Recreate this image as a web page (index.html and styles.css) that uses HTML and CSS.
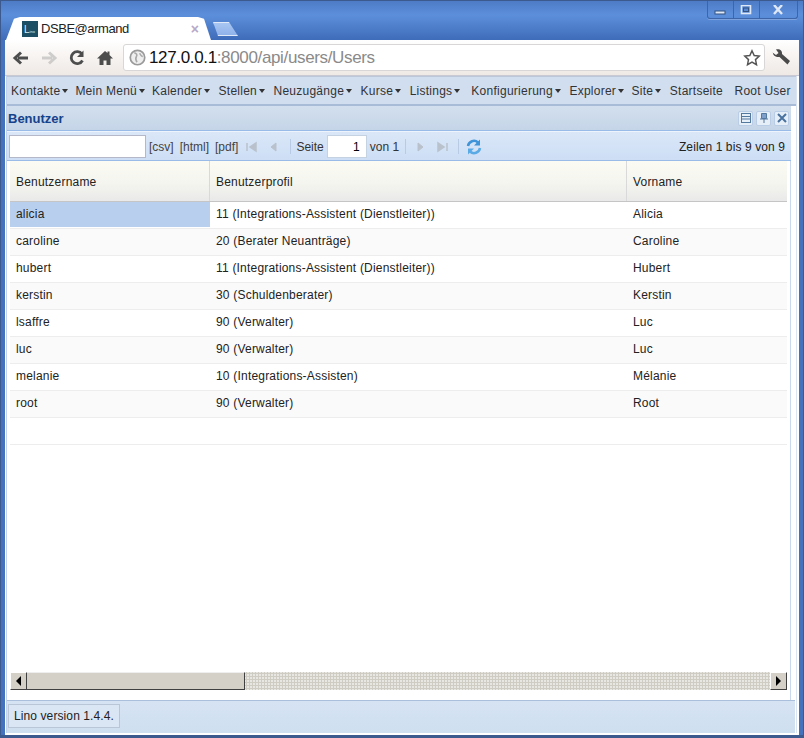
FILE: index.html
```html
<!DOCTYPE html>
<html lang="en">
<head>
    <meta charset="UTF-8">
    <title>DSBE@armand</title>
    <link rel="stylesheet" href="styles.css">
</head>
<body>
<div class="window">
    <div class="tabstrip">
        <div class="tab">
            <span class="favicon">L<i>ino</i></span>
            <span class="tab-title">DSBE@armand</span>
            <span class="tab-close">×</span>
        </div>
        <div class="newtab"></div>
        <div class="win-buttons">
            <span class="win-btn min"><svg width="12" height="10" viewBox="0 0 12 10"><rect x="1" y="6" width="10" height="3" fill="#dfe8f6" stroke="#33527f" stroke-width="1"/></svg></span>
            <span class="win-btn max"><svg width="12" height="10" viewBox="0 0 12 10"><rect x="1.5" y="0.5" width="9" height="8" fill="none" stroke="#dfe8f6" stroke-width="1.6"/><rect x="3.5" y="3" width="5" height="3.5" fill="none" stroke="#33527f"/></svg></span>
            <span class="win-btn close"><svg width="12" height="10" viewBox="0 0 12 10"><path d="M2 0l8 9M10 0L2 9" stroke="#dfe8f6" stroke-width="2.4"/></svg></span>
        </div>
    </div>

    <div class="client">
        <div class="navbar">
            <svg class="nav-icon" width="18" height="18" viewBox="0 0 18 18"><path d="M16 9H6M9 3.500L3 9l6 5.500" fill="none" stroke="#4d4d4d" stroke-width="3"/></svg>
            <svg class="nav-icon" width="18" height="18" viewBox="0 0 18 18"><path d="M2 9h10M9 3.500L15 9l-6 5.500" fill="none" stroke="#cfcdcb" stroke-width="3"/></svg>
            <svg class="nav-icon" width="18" height="18" viewBox="0 0 18 18"><path d="M14.500 11.500A6 6 0 1 1 14 5" fill="none" stroke="#4d4d4d" stroke-width="2.800"/><path d="M15.500 1.500v6.500h-6.500z" fill="#4d4d4d"/></svg>
            <svg class="nav-icon" width="18" height="18" viewBox="0 0 18 18"><path d="M9 2L1 9.500h2.500V16h4v-4.500h3V16h4V9.500H17L13.500 6V2.500h-2V4z" fill="#4d4d4d"/></svg>
            <div class="address">
                <svg width="17" height="17" viewBox="0 0 16 16"><circle cx="8" cy="8" r="6.800" fill="#eeeeee" stroke="#9a9a9a" stroke-width="1.600"/><path d="M5 3.500c2 .5 3 2 2 3.500s-1 3 .5 5.500M10 4c1 2 2 3 3 3" fill="none" stroke="#a8a8a8" stroke-width="1.500"/></svg>
                <span class="url"><b>127.0.0.1</b>:8000/api/users/Users</span>
                <svg class="star" width="18" height="18" viewBox="0 0 18 18"><path d="M9 1.800l2.200 4.700 5 .6-3.700 3.500 1 5.100L9 13.200l-4.500 2.500 1-5.100L1.800 7.100l5-.6z" fill="#fff" stroke="#555" stroke-width="1.500"/></svg>
            </div>
            <svg class="wrench" width="20" height="20" viewBox="0 0 20 20"><path d="M1.500 4.500l3.500 2.500 2.500-2-2.500-3.500c3.500-1 6.500 1 6 4.500l8 7-2.500 3.500-8-7.500c-3.500 .5-7-2-6.500-4.500z" fill="#4a4a4a"/></svg>
        </div>

        <div class="app">
            <div class="menubar">
                <span class="menu has-sub">Kontakte</span>
                <span class="menu has-sub">Mein Menü</span>
                <span class="menu has-sub">Kalender</span>
                <span class="menu has-sub">Stellen</span>
                <span class="menu has-sub">Neuzugänge</span>
                <span class="menu has-sub">Kurse</span>
                <span class="menu has-sub">Listings</span>
                <span class="menu has-sub">Konfigurierung</span>
                <span class="menu has-sub">Explorer</span>
                <span class="menu has-sub">Site</span>
                <span class="menu">Startseite</span>
                <span class="menu root">Root User</span>
            </div>

            <div class="panel-head">
                <span class="panel-title">Benutzer</span>
                <div class="tools">
                    <span class="tool"><svg width="12" height="12" viewBox="0 0 12 12"><rect x="1.500" y="1.500" width="9" height="9" fill="none" stroke="#54799f"/><path d="M2 4.500h8M2 7h8" stroke="#54799f"/></svg></span>
                    <span class="tool"><svg width="12" height="12" viewBox="0 0 12 12"><path d="M3.500 1.500h5v5h-5zM2 7h8M6 7v4" fill="#7e9fca" stroke="#54799f"/></svg></span>
                    <span class="tool"><svg width="12" height="12" viewBox="0 0 12 12"><path d="M2 2l8 8M10 2l-8 8" stroke="#4a72a0" stroke-width="2"/></svg></span>
                </div>
            </div>

            <div class="pager">
                <input class="search" type="text">
                <a class="export">[csv]</a>
                <a class="export">[html]</a>
                <a class="export">[pdf]</a>
                <svg class="pg-first" width="14" height="12" viewBox="0 0 14 12"><path d="M2 2v8M11 2v8L5 6z" fill="#b9c2cc" stroke="#b9c2cc" stroke-width="1.500"/></svg>
                <svg class="pg-prev" width="10" height="12" viewBox="0 0 10 12"><path d="M7 2v8L2 6z" fill="#b9c2cc" stroke="#b9c2cc"/></svg>
                <span class="sep"></span>
                <span class="pg-label">Seite</span>
                <input class="page-no" type="text" value="1">
                <span class="pg-of">von 1</span>
                <span class="sep"></span>
                <svg class="pg-next" width="10" height="12" viewBox="0 0 10 12"><path d="M3 2v8l5-4z" fill="#b9c2cc" stroke="#b9c2cc"/></svg>
                <svg class="pg-last" width="14" height="12" viewBox="0 0 14 12"><path d="M12 2v8M3 2v8l6-4z" fill="#b9c2cc" stroke="#b9c2cc" stroke-width="1.500"/></svg>
                <span class="sep"></span>
                <svg class="pg-refresh" width="18" height="18" viewBox="0 0 18 18"><path d="M3 8a6 6 0 0 1 10-3.500" fill="none" stroke="#3f93d8" stroke-width="2.500"/><path d="M15 1.500v6h-6z" fill="#3f93d8"/><path d="M15 10a6 6 0 0 1-10 3.500" fill="none" stroke="#5aaae6" stroke-width="2.500"/><path d="M3 16.500v-6h6z" fill="#5aaae6"/></svg>
                <span class="pg-info">Zeilen 1 bis 9 von 9</span>
            </div>

            <div class="grid">
                <div class="row head">
                    <div class="cell c1">Benutzername</div>
                    <div class="cell c2">Benutzerprofil</div>
                    <div class="cell c3">Vorname</div>
                </div>
                <div class="row"><div class="cell c1 selected">alicia</div><div class="cell c2">11 (Integrations-Assistent (Dienstleiter))</div><div class="cell c3">Alicia</div></div>
                <div class="row alt"><div class="cell c1">caroline</div><div class="cell c2">20 (Berater Neuanträge)</div><div class="cell c3">Caroline</div></div>
                <div class="row"><div class="cell c1">hubert</div><div class="cell c2">11 (Integrations-Assistent (Dienstleiter))</div><div class="cell c3">Hubert</div></div>
                <div class="row alt"><div class="cell c1">kerstin</div><div class="cell c2">30 (Schuldenberater)</div><div class="cell c3">Kerstin</div></div>
                <div class="row"><div class="cell c1">lsaffre</div><div class="cell c2">90 (Verwalter)</div><div class="cell c3">Luc</div></div>
                <div class="row alt"><div class="cell c1">luc</div><div class="cell c2">90 (Verwalter)</div><div class="cell c3">Luc</div></div>
                <div class="row"><div class="cell c1">melanie</div><div class="cell c2">10 (Integrations-Assisten)</div><div class="cell c3">Mélanie</div></div>
                <div class="row alt"><div class="cell c1">root</div><div class="cell c2">90 (Verwalter)</div><div class="cell c3">Root</div></div>
                <div class="row"><div class="cell c1"></div><div class="cell c2"></div><div class="cell c3"></div></div>

                <div class="hscroll">
                    <span class="sb-btn"><i class="arrow-left"></i></span>
                    <span class="sb-thumb"></span>
                    <span class="sb-track"></span>
                    <span class="sb-btn"><i class="arrow-right"></i></span>
                </div>
            </div>

            <div class="footer">
                <span class="version">Lino version 1.4.4.</span>
            </div>
        </div>
    </div>
</div>
</body>
</html>
```

FILE: styles.css
```css
* {
    box-sizing: border-box;
}

html, body {
    margin: 0;
    padding: 0;
    width: 804px;
    height: 738px;
    overflow: hidden;
}

body {
    font-family: "Liberation Sans", Arial, sans-serif;
    font-size: 12px;
    color: #1a1a1a;
}

.window {
    width: 804px;
    height: 738px;
    display: flex;
    flex-direction: column;
    background: #4572bd;
    border: 1px solid #3d5a8f;
    border-bottom: 3px solid #3d5a8f;
    padding: 0 4px;
}

/* tab strip */
.tabstrip {
    height: 39px;
    flex: none;
    display: flex;
    align-items: flex-end;
    margin: 0 -4px;
    padding-left: 5px;
    background: linear-gradient(#4e7bc6 0, #5c8fdb 14px, #3f6cb8 39px);
}

.tab {
    width: 205px;
    height: 23px;
    display: flex;
    align-items: center;
    padding: 0 12px 0 16px;
    background: #fff;
    border-radius: 7px 7px 0 0;
    clip-path: polygon(0 100%, 8px 8%, 14px 0, 192px 0, 198px 8%, 205px 100%);
}

.favicon {
    width: 16px;
    height: 16px;
    background: #1c4f63;
    color: #d6eef2;
    font-size: 10px;
    line-height: 17px;
    padding-left: 2px;
    margin-right: 3px;
    overflow: hidden;
    white-space: nowrap;
}

.favicon i {
    font-style: normal;
    font-size: 4px;
}

.tab-title {
    flex: 1;
    font-size: 13px;
    letter-spacing: -0.45px;
    color: #222;
}

.tab-close {
    color: #b7a9c9;
    font-size: 14px;
    font-weight: bold;
}

.newtab {
    width: 25px;
    height: 14px;
    margin: 0 0 4px 2px;
    background: linear-gradient(#a9c6f2, #8fb2ea);
    border: 1px solid #e0e9f7;
    clip-path: polygon(0 0, 16px 0, 25px 100%, 5px 100%);
}

.win-buttons {
    margin-left: auto;
    margin-right: 5px;
    align-self: flex-start;
    width: 91px;
    height: 18px;
    display: flex;
    border: 1px solid #3d65a8;
    border-top: none;
    border-radius: 0 0 3px 3px;
    box-shadow: 0 1px 0 #7ea3dc;
}

.win-btn {
    flex: 1;
    display: flex;
    align-items: center;
    justify-content: center;
    border-left: 1px solid #3d65a8;
}

.win-btn.min {
    border-left: none;
}

.win-btn.close {
    flex: 1.500;
}

/* chrome toolbar */
.client {
    flex: 1;
    display: flex;
    flex-direction: column;
    background: #fff;
    min-height: 0;
}

.navbar {
    height: 36px;
    flex: none;
    display: flex;
    align-items: center;
    padding: 0 2px 0 7px;
    gap: 10px;
    background: linear-gradient(#ffffff 0, #f5f1ee 60%, #efe9e6 100%);
    border-bottom: 1px solid #c9c9d3;
}

.nav-icon {
    flex: none;
}

.address {
    width: 642px;
    height: 27px;
    margin-left: -1px;
    display: flex;
    align-items: center;
    gap: 3px;
    padding: 0 3px 0 5px;
    background: #fff;
    border: 1px solid #d8d6d6;
    border-radius: 3px;
}

.url {
    flex: 1;
    padding-top: 1px;
    font-size: 17px;
    color: #8a8a8a;
    letter-spacing: -0.35px;
}

.url b {
    font-weight: normal;
    color: #111;
}

.wrench {
    margin-left: -4px;
}

/* app */
.app {
    flex: 1;
    display: flex;
    flex-direction: column;
    min-height: 0;
    margin: 0 2px 2px 1px;
    background: #fff;
    border-left: 1px solid #c3d2e6;
    border-right: 1px solid #dbe5f2;
}

.menubar {
    height: 30px;
    flex: none;
    display: flex;
    align-items: center;
    padding: 1px 0 0 4px;
    background: #d0def0;
    border-top: 1px solid #bcc8da;
    border-bottom: 2px solid #a8bcd8;
    white-space: nowrap;
}

.menu {
    margin-right: 8.5px;
    letter-spacing: 0.25px;
    color: #333;
}

/* the first two and Listings don't sit on the regular spacing */
.menu:nth-child(-n+2) {
    margin-right: 7px;
}

.menu:nth-child(7) {
    margin-right: 11px;
}

.menu:nth-child(9) {
    margin-right: 7.5px;
}

.has-sub::after {
    content: "";
    display: inline-block;
    margin-left: 2px;
    vertical-align: 2px;
    border-top: 4px solid #333;
    border-left: 3.500px solid transparent;
    border-right: 3.500px solid transparent;
}

.menu.root {
    margin-left: 3px;
    margin-right: 0;
}

.panel-head {
    height: 25px;
    flex: none;
    display: flex;
    align-items: center;
    justify-content: space-between;
    padding: 0 2px 0 1px;
    margin-right: 5px;
    background: linear-gradient(#d3dfed, #c5d5e8);
    border-bottom: 1px solid #99bbe8;
}

.panel-title {
    font-size: 13px;
    font-weight: bold;
    color: #15428b;
}

.tools {
    display: flex;
    gap: 3px;
}

.tool {
    width: 15px;
    height: 15px;
    display: flex;
    align-items: center;
    justify-content: center;
    background: #e6eef8;
    border: 1px solid #b9cde6;
    border-radius: 2px;
}

.pager {
    height: 30px;
    flex: none;
    display: flex;
    align-items: center;
    padding: 1px 6px 0 2px;
    margin-right: 5px;
    background: linear-gradient(#dbe7f8, #cddef5);
    border-bottom: 1px solid #99bbe8;
    border-top: 1px solid #eef4fc;
    color: #333;
}

.search {
    width: 137px;
    height: 23px;
    border: 1px solid #b5b8c8;
    background: #fff;
    margin-right: 3px;
}

.export {
    margin-right: 6px;
    color: #444;
}

.pg-first {
    margin: 0 10px 0 1px;
}

.pg-prev {
    margin-right: 5px;
}

.sep {
    width: 1px;
    height: 15px;
    background: #b8cbe4;
    margin: 0 6px;
}

.pg-label {
    margin-left: -1px;
}

.page-no {
    width: 40px;
    height: 23px;
    margin: 0 3px 0 3px;
    padding: 0 6px 0 0;
    border: 1px solid #c5d2e2;
    background: #fff;
    font: 12px "Liberation Sans", sans-serif;
    text-align: right;
}

.pg-next {
    margin: 0 10px 0 3px;
}

.pg-last {
    margin-right: 3px;
}

.pg-info {
    margin-left: auto;
    letter-spacing: 0.1px;
    color: #222;
}

.grid {
    flex: 1;
    display: flex;
    flex-direction: column;
    min-height: 0;
    margin-right: 5px;
    padding: 0 3px 0 3px;
    background: #fff;
    border-right: 1px solid #c9d8ec;
}

.row {
    height: 27px;
    flex: none;
    display: flex;
    border-bottom: 1px solid #ededed;
    letter-spacing: 0.2px;
    color: #222;
}

.row.alt {
    background: #fafafa;
}

.row.head {
    height: 41px;
    background: linear-gradient(#fbfbf4, #f5f5ef 55%, #e9e9e9);
    border-bottom: 1px solid #c5c5c5;
}

.cell {
    padding: 0 6px 2px;
    display: flex;
    align-items: center;
}

.c1 {
    width: 200px;
}

.c2 {
    width: 417px;
}

.c3 {
    flex: 1;
}

.head .cell {
    padding: 2px 6px 0;
    border-right: 1px solid #d9d9d9;
}

.head .c3 {
    border-right: none;
}

.cell.selected {
    background: #b8cfee;
    margin-bottom: 1px;
    padding-bottom: 1px;
}

.hscroll {
    margin-top: auto;
    margin-bottom: 10px;
    height: 18px;
    flex: none;
    display: flex;
    background: #fff;
}

.sb-btn {
    width: 17px;
    height: 18px;
    flex: none;
    display: flex;
    align-items: center;
    justify-content: center;
    background: #d4d0c8;
    border-right: 1px solid #404040;
    border-bottom: 1px solid #404040;
    border-top: 1px solid #fff;
    border-left: 1px solid #fff;
}

.arrow-left {
    border-right: 5px solid #000;
    border-top: 5px solid transparent;
    border-bottom: 5px solid transparent;
}

.arrow-right {
    border-left: 5px solid #000;
    border-top: 5px solid transparent;
    border-bottom: 5px solid transparent;
}

.sb-thumb {
    width: 218px;
    background: #d4d0c8;
    border-right: 1px solid #404040;
    border-bottom: 1px solid #404040;
    border-top: 1px solid #eee;
}

.sb-track {
    flex: 1;
    background-color: #e9e7e1;
    background-image: radial-gradient(#cfccc4 1px, transparent 1.200px);
    background-size: 3px 3px;
}

.footer {
    height: 33px;
    flex: none;
    display: flex;
    align-items: center;
    padding: 0 3px 3px 1px;
    margin-right: 1px;
    background: linear-gradient(#d6e3f3, #cedff0);
    border-top: 1px solid #a9bfdc;
}

.version {
    height: 24px;
    padding: 0 5px;
    display: flex;
    align-items: center;
    letter-spacing: 0.1px;
    border: 1px solid #b9c6d8;
    background: #dbe6f4;
    color: #222;
}
```
